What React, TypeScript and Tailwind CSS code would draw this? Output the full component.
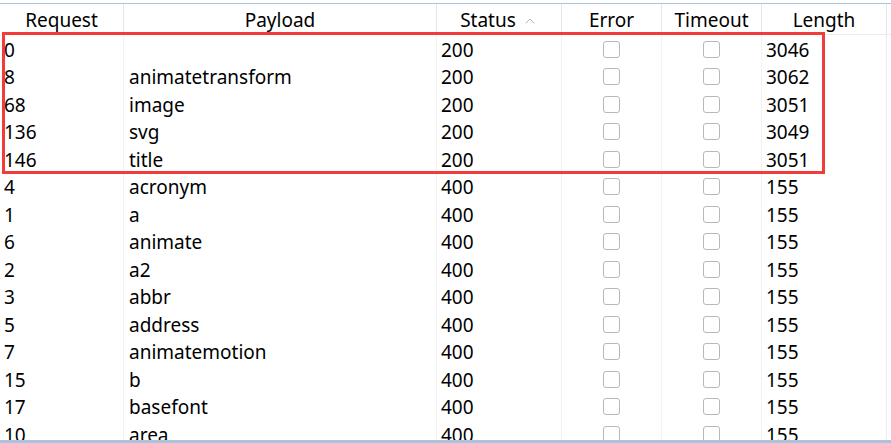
import { ChevronUp } from "lucide-react";

interface Row {
  request: string;
  payload: string;
  status: string;
  length: string;
}

const rows: Row[] = [
  { request: "0", payload: "", status: "200", length: "3046" },
  { request: "8", payload: "animatetransform", status: "200", length: "3062" },
  { request: "68", payload: "image", status: "200", length: "3051" },
  { request: "136", payload: "svg", status: "200", length: "3049" },
  { request: "146", payload: "title", status: "200", length: "3051" },
  { request: "4", payload: "acronym", status: "400", length: "155" },
  { request: "1", payload: "a", status: "400", length: "155" },
  { request: "6", payload: "animate", status: "400", length: "155" },
  { request: "2", payload: "a2", status: "400", length: "155" },
  { request: "3", payload: "abbr", status: "400", length: "155" },
  { request: "5", payload: "address", status: "400", length: "155" },
  { request: "7", payload: "animatemotion", status: "400", length: "155" },
  { request: "15", payload: "b", status: "400", length: "155" },
  { request: "17", payload: "basefont", status: "400", length: "155" },
  { request: "10", payload: "area", status: "400", length: "155" },
];

const cols = "grid grid-cols-[124px_313px_125px_100px_100px_125px_1fr]";

function Checkbox() {
  return <span className="block size-[17px] shrink-0 rounded-[3px] border border-[#b8b8b8] bg-white" />;
}

export default function App() {
  return (
    <div
      className="relative h-[443px] w-[891px] overflow-hidden bg-white text-[19px] leading-none text-black"
      style={{ fontFamily: '"Noto Sans", "Noto Sans CJK SC", sans-serif' }}
    >
      <div className="h-[3px]" />
      <div className="h-px bg-[#a9c2de]" />

      <div className={`${cols} h-[31px] border-b border-[#ececec]`}>
        <div className="flex items-center justify-center border-r border-[#e6e6e6] pt-[3px]">Request</div>
        <div className="flex items-center justify-center border-r border-[#e6e6e6] pt-[3px]">Payload</div>
        <div className="flex items-center justify-center gap-1.5 border-r border-[#e6e6e6] pt-[3px]">
          <span>Status</span>
          <ChevronUp className="h-4 w-4 text-[#b5b5b5]" strokeWidth={1.5} />
        </div>
        <div className="flex items-center justify-center border-r border-[#e6e6e6] pt-[3px]">Error</div>
        <div className="flex items-center justify-center border-r border-[#e6e6e6] pt-[3px]">Timeout</div>
        <div className="flex items-center justify-center border-r border-[#e6e6e6] pt-[3px]">Length</div>
        <div />
      </div>

      {rows.map((row, i) => (
        <div key={i} className={`${cols} h-[27.5px]`}>
          <div className="flex items-center border-r border-[#f2f2f2] pl-[4px] pt-[3px]">{row.request}</div>
          <div className="flex items-center border-r border-[#f2f2f2] pl-[5px] pt-[3px]">{row.payload}</div>
          <div className="flex items-center border-r border-[#f2f2f2] pl-[4px] pt-[3px]">{row.status}</div>
          <div className="flex items-center justify-center border-r border-[#f2f2f2] pt-[1px]">
            <Checkbox />
          </div>
          <div className="flex items-center justify-center border-r border-[#f2f2f2] pt-[1px]">
            <Checkbox />
          </div>
          <div className="flex items-center border-r border-[#ececec] pl-[4px] pt-[3px]">{row.length}</div>
          <div />
        </div>
      ))}

      <div className="pointer-events-none absolute left-[2px] top-[32px] h-[142px] w-[823px] border-[3px] border-[#f23b3b]" />
      <div className="absolute left-0 top-[440px] h-[3px] w-full bg-[#a9c2de]" />
    </div>
  );
}
